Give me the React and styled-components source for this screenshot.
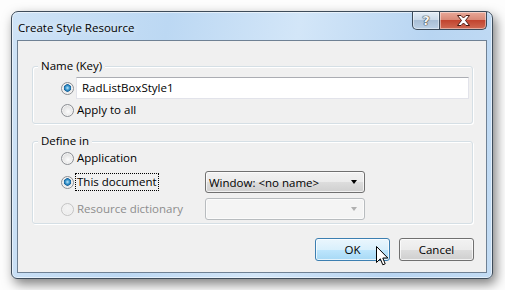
import React from 'react';
import styled, { createGlobalStyle } from 'styled-components';

const GlobalStyle = createGlobalStyle`
    html, body {
        margin: 0;
        padding: 0;
        background: #fdfdfd;
    }
    body {
        font-family: "Open Sans", "Noto Sans", "DejaVu Sans", sans-serif;
        font-size: 11.5px;
        color: #000;
    }
`

const Page = styled.div`
    position: relative;
    width: 505px;
    height: 290px;
    box-sizing: border-box;
    padding: 11px 12px 11px 11px;
    overflow: hidden;
`

const Window = styled.div`
    width: 482px;
    height: 268px;
    box-sizing: border-box;
    display: flex;
    flex-direction: column;
    padding: 0 5px 5px 5px;
    border: 1px solid #3e4c5a;
    border-radius: 7px 7px 6px 6px;
    background: linear-gradient(100deg, #cfe3f6 0%, #bcd8f3 30%, #d3e6f8 55%, #b8d5f2 80%, #c3dcf4 100%);
    box-shadow: inset 0 0 0 1px rgba(255, 255, 255, 0.55), 3px 5px 12px rgba(0, 0, 0, 0.5);
`

const TitleBar = styled.div`
    height: 28px;
    display: flex;
    justify-content: space-between;
    align-items: flex-start;
    flex-shrink: 0;
`

const Title = styled.div`
    line-height: 31px;
    padding-left: 1px;
    font-size: 11.5px;
    color: #000;
    text-shadow: 0 0 6px rgba(255, 255, 255, 0.9);
`

const Controls = styled.div`
    display: flex;
    height: 18px;
`

const CaptionButton = styled.div`
    height: 18px;
    box-sizing: border-box;
    display: flex;
    align-items: center;
    justify-content: center;
    border: 1px solid #3b4a59;
    border-top: none;
    width: ${p => p.$wide ? '47px' : '28px'};
    border-radius: ${p => p.$wide ? '0 0 5px 0' : '0 0 0 5px'};
    border-left: ${p => p.$wide ? 'none' : '1px solid #3b4a59'};
    background: ${p => p.$wide
        ? 'linear-gradient(180deg, #e8a898 0%, #d98a78 45%, #c2442f 50%, #cf6a53 100%)'
        : 'linear-gradient(180deg, #e3edf7 0%, #ccdbea 45%, #a9bfd6 50%, #bcd1e6 100%)'};
    box-shadow: inset 0 0 0 1px rgba(255, 255, 255, 0.45);
`

const HelpGlyph = styled.span`
    font-family: "DejaVu Sans", sans-serif;
    font-weight: bold;
    font-size: 13px;
    line-height: 1;
    color: #f4f6f8;
    text-shadow: 0 0 1px #333, 0 0 1px #333, 0 0 1px #333;
`

const Client = styled.div`
    flex: 1;
    display: flex;
    flex-direction: column;
    box-sizing: border-box;
    border: 1px solid #6f8194;
    background: #f0f0f0;
    padding: 25px 13px 0 14px;
`

const Group = styled.div`
    position: relative;
    border: 1px solid #d5dfe5;
    border-radius: 3px;
    box-shadow: inset 1px 1px 0 #fff, 1px 1px 0 #fff;
    margin-top: ${p => p.$top || 0}px;
    padding: ${p => p.$pad};
    display: flex;
    flex-direction: column;
`

const Legend = styled.span`
    position: absolute;
    top: -9px;
    left: 5px;
    padding: 0 3px;
    line-height: 16px;
    background: #f0f0f0;
`

const Row = styled.div`
    display: flex;
    align-items: center;
    height: 22px;
    margin-top: ${p => p.$gap || 0}px;
`

const Choice = styled.div`
    display: flex;
    align-items: center;
    gap: 1px;
    width: ${p => p.$width ? p.$width + 'px' : 'auto'};
    color: ${p => p.$disabled ? '#8d8d8d' : '#000'};
`

const Radio = styled.span`
    width: 13px;
    height: 13px;
    box-sizing: border-box;
    border-radius: 50%;
    flex-shrink: 0;
    border: 1px solid ${p => p.$disabled ? '#c4c4c4' : '#8c8f94'};
    background: ${p => p.$checked
        ? 'radial-gradient(circle at 50% 45%, #bfe4f8 0, #3e9bd0 2px, #14609a 3.5px, #e6e6e6 4px, #f6f6f6 100%)'
        : p.$disabled
            ? 'radial-gradient(circle at 50% 40%, #f4f4f4 0, #e8e8e8 100%)'
            : 'radial-gradient(circle at 55% 60%, #fdfdfd 0, #e2e2e2 60%, #cfcfcf 100%)'};
    box-shadow: inset 0 0 0 1px ${p => p.$disabled ? '#f2f2f2' : '#f4f4f4'};
`

const ChoiceText = styled.span`
    border: 1px ${p => p.$focused ? 'dotted #000' : 'solid transparent'};
    padding: 0 1px;
    line-height: 16px;
    white-space: nowrap;
`

const TextBox = styled.div`
    width: 393px;
    height: 22px;
    box-sizing: border-box;
    margin-left: 2px;
    border: 1px solid #e2e3ea;
    border-top-color: #abadb3;
    background: #fff;
    padding-left: 5px;
    line-height: 20px;
`

const Combo = styled.div`
    width: 160px;
    height: 22px;
    box-sizing: border-box;
    display: flex;
    align-items: center;
    justify-content: space-between;
    padding: 0 7px 0 3px;
    border-radius: 3px;
    border: 1px solid ${p => p.$disabled ? '#b8bcbf' : '#707070'};
    background: ${p => p.$disabled
        ? '#f4f4f4'
        : 'linear-gradient(180deg, #f2f2f2 0%, #ebebeb 50%, #dddddd 51%, #cfcfcf 100%)'};
    box-shadow: inset 0 0 0 1px ${p => p.$disabled ? '#fbfbfb' : 'rgba(255,255,255,0.7)'};
    white-space: nowrap;
`

const Arrow = styled.span`
    width: 0;
    height: 0;
    border-left: 3.5px solid transparent;
    border-right: 3.5px solid transparent;
    border-top: 4px solid ${p => p.$disabled ? '#b0b0b0' : '#000'};
`

const ButtonRow = styled.div`
    display: flex;
    justify-content: flex-end;
    gap: 9px;
    margin-top: 14px;
    margin-right: -1px;
`

const Button = styled.div`
    width: 75px;
    height: 23px;
    box-sizing: border-box;
    display: flex;
    align-items: center;
    justify-content: center;
    border-radius: 3px;
    border: 1px solid ${p => p.$hot ? '#3c7fb1' : '#707070'};
    background: ${p => p.$hot
        ? 'linear-gradient(180deg, #eaf6fd 0%, #d9f0fc 50%, #bee6fd 51%, #a7d9f5 100%)'
        : 'linear-gradient(180deg, #f2f2f2 0%, #ebebeb 50%, #dddddd 51%, #cfcfcf 100%)'};
    box-shadow: inset 0 0 0 1px rgba(255, 255, 255, 0.7);
`

const Cursor = styled.svg`
    position: absolute;
    left: 376px;
    top: 246px;
`

const CloseIcon = () => (
    <svg width="15" height="11" viewBox="0 0 15 11">
        <path d="M1.5 0.5 L5 0.5 L7.5 3 L10 0.5 L13.5 0.5 L9.5 5.5 L13.5 10.5 L10 10.5 L7.5 8 L5 10.5 L1.5 10.5 L5.5 5.5 Z"
            fill="#fff" stroke="#4a1a12" strokeWidth="1" strokeLinejoin="round" />
    </svg>
)

const RadioChoice = ({ checked, disabled, focused, width, children }) => (
    <Choice $width={width} $disabled={disabled}>
        <Radio $checked={checked} $disabled={disabled} />
        <ChoiceText $focused={focused}>{children}</ChoiceText>
    </Choice>
)

export default function App() {
    return (
        <Page>
            <GlobalStyle />
            <Window>
                <TitleBar>
                    <Title>Create Style Resource</Title>
                    <Controls>
                        <CaptionButton><HelpGlyph>?</HelpGlyph></CaptionButton>
                        <CaptionButton $wide><CloseIcon /></CaptionButton>
                    </Controls>
                </TitleBar>
                <Client>
                    <Group $pad="10px 0 2px 28px">
                        <Legend>Name (Key)</Legend>
                        <Row>
                            <Radio $checked />
                            <TextBox>RadListBoxStyle1</TextBox>
                        </Row>
                        <Row>
                            <RadioChoice>Apply to all</RadioChoice>
                        </Row>
                    </Group>
                    <Group $top={17} $pad="5px 0 3px 28px">
                        <Legend>Define in</Legend>
                        <Row>
                            <RadioChoice>Application</RadioChoice>
                        </Row>
                        <Row $gap={2}>
                            <RadioChoice checked focused width={144}>This document</RadioChoice>
                            <Combo>Window: &lt;no name&gt;<Arrow /></Combo>
                        </Row>
                        <Row $gap={5}>
                            <RadioChoice disabled width={144}>Resource dictionary</RadioChoice>
                            <Combo $disabled><span /><Arrow $disabled /></Combo>
                        </Row>
                    </Group>
                    <ButtonRow>
                        <Button $hot>OK</Button>
                        <Button>Cancel</Button>
                    </ButtonRow>
                </Client>
            </Window>
            <Cursor width="13" height="21" viewBox="0 0 13 21">
                <path d="M0.5 0.5 L0.5 16.5 L4.3 12.8 L6.8 18.8 L9.2 17.8 L6.8 12 L11.8 12 Z"
                    fill="#fff" stroke="#000" strokeWidth="1" strokeLinejoin="miter" />
            </Cursor>
        </Page>
    );
}
